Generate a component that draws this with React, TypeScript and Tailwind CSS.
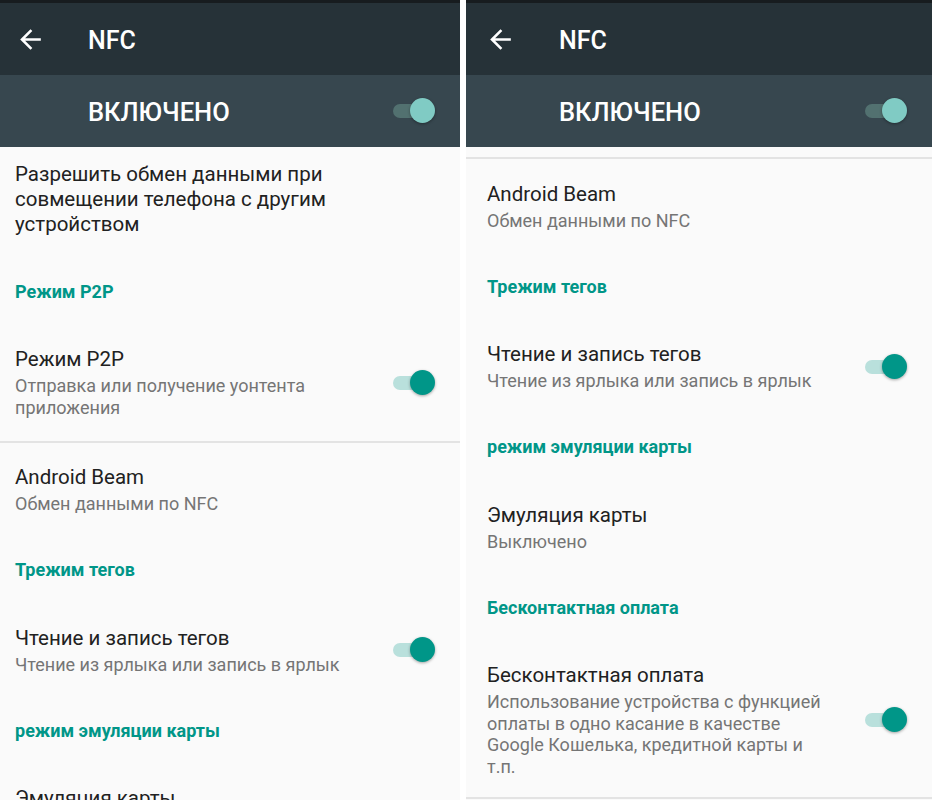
import React from "react";

const FONT = { fontFamily: "Roboto, 'Noto Sans', sans-serif" };

function BackArrow() {
  return (
    <svg width="31" height="31" viewBox="0 0 24 24" fill="#ffffff" aria-hidden="true">
      <path d="M20 11H7.83l5.59-5.59L12 4l-8 8 8 8 1.41-1.41L7.83 13H20v-2z" />
    </svg>
  );
}

function Switch({ dark }: { dark?: boolean }) {
  return (
    <div className="relative w-[42px] h-[26px] shrink-0">
      <div
        className={
          "absolute left-0 top-[6px] h-[14px] w-[36px] rounded-full " +
          (dark ? "bg-[#527170]" : "bg-[#b9e0dc]")
        }
      />
      <div
        className={
          "absolute right-0 top-0 h-[25px] w-[25px] rounded-full shadow-[0_1px_3px_rgba(0,0,0,0.35)] " +
          (dark ? "bg-[#80cbc4]" : "bg-[#009688]")
        }
      />
    </div>
  );
}

type Item = {
  kind: "item" | "cat" | "divider" | "space";
  title?: string[];
  summary?: string[];
  toggle?: boolean;
  first?: boolean;
  last?: boolean;
  h?: string;
};

function Row({ it, pl }: { it: Item; pl: string }) {
  if (it.kind === "divider") return <div className="h-[2px] bg-[#e3e3e3] shrink-0" />;
  if (it.kind === "space") return <div className={"shrink-0 " + (it.h || "")} />;
  if (it.kind === "cat")
    return (
      <div className={"h-[66px] flex items-center shrink-0 " + pl}>
        <span className="text-[18px] leading-[20px] font-bold text-[#009688]">{it.title![0]}</span>
      </div>
    );
  const pad = it.first ? "pt-[15px] pb-[21.5px]" : it.last ? "pt-[22.5px] pb-[20px]" : "py-[22.5px]";
  return (
    <div className={"flex items-center pr-[25px] shrink-0 " + pl + " " + pad}>
      <div className="flex-1 flex flex-col">
        <div className="text-[20.5px] leading-[25px] text-[#212121]">
          {it.title!.map((l, i) => (
            <div key={i} className="whitespace-nowrap">
              {l}
            </div>
          ))}
        </div>
        {it.summary && (
          <div className="mt-[3px] text-[18px] leading-[21.5px] text-[#757575]">
            {it.summary.map((l, i) => (
              <div key={i} className="whitespace-nowrap">
                {l}
              </div>
            ))}
          </div>
        )}
      </div>
      {it.toggle && <Switch />}
    </div>
  );
}

function Panel({
  width,
  items,
  pl,
  arrowPl,
  titleGap,
  barPl,
}: {
  width: string;
  items: Item[];
  pl: string;
  arrowPl: string;
  titleGap: string;
  barPl: string;
}) {
  return (
    <div className={"flex flex-col h-[800px] overflow-hidden bg-[#fafafa] shrink-0 " + width}>
      <div className="h-[3px] bg-[#171c1f] shrink-0" />
      <div className={"h-[72px] bg-[#263238] flex items-center shrink-0 " + arrowPl}>
        <BackArrow />
        <span className={"mt-[3px] text-[25px] font-medium text-white leading-none " + titleGap}>NFC</span>
      </div>
      <div className="h-[72px] bg-[#37474f] flex items-center justify-between pr-[25px] shrink-0">
        <span className={"mt-[3px] text-[25.5px] font-medium text-white leading-none " + barPl}>ВКЛЮЧЕНО</span>
        <Switch dark />
      </div>
      {items.map((it, i) => (
        <Row key={i} it={it} pl={pl} />
      ))}
    </div>
  );
}

const leftItems: Item[] = [
  {
    kind: "item",
    first: true,
    title: ["Разрешить обмен данными при", "совмещении телефона с другим", "устройством"],
  },
  { kind: "cat", title: ["Режим P2P"] },
  {
    kind: "item",
    title: ["Режим P2P"],
    summary: ["Отправка или получение уонтента", "приложения"],
    toggle: true,
  },
  { kind: "divider" },
  { kind: "item", title: ["Android Beam"], summary: ["Обмен данными по NFC"] },
  { kind: "cat", title: ["Трежим тегов"] },
  {
    kind: "item",
    title: ["Чтение и запись тегов"],
    summary: ["Чтение из ярлыка или запись в ярлык"],
    toggle: true,
  },
  { kind: "cat", title: ["режим эмуляции карты"] },
  { kind: "item", title: ["Эмуляция карты"], summary: ["Выключено"] },
];

const rightItems: Item[] = [
  { kind: "space", h: "h-[10px]" },
  { kind: "divider" },
  { kind: "item", title: ["Android Beam"], summary: ["Обмен данными по NFC"] },
  { kind: "cat", title: ["Трежим тегов"] },
  {
    kind: "item",
    title: ["Чтение и запись тегов"],
    summary: ["Чтение из ярлыка или запись в ярлык"],
    toggle: true,
  },
  { kind: "cat", title: ["режим эмуляции карты"] },
  { kind: "item", title: ["Эмуляция карты"], summary: ["Выключено"] },
  { kind: "cat", title: ["Бесконтактная оплата"] },
  {
    kind: "item",
    last: true,
    title: ["Бесконтактная оплата"],
    summary: [
      "Использование устройства с функцией",
      "оплаты в одно касание в качестве",
      "Google Кошелька, кредитной карты и",
      "т.п.",
    ],
    toggle: true,
  },
  { kind: "divider" },
];

export default function App() {
  return (
    <div className="flex w-[932px] h-[800px] bg-white overflow-hidden" style={FONT}>
      <Panel
        width="w-[460px]"
        items={leftItems}
        pl="pl-[15px]"
        arrowPl="pl-[15px]"
        titleGap="ml-[42px]"
        barPl="pl-[88px]"
      />
      <div className="w-[6px] shrink-0 bg-white" />
      <Panel
        width="w-[466px]"
        items={rightItems}
        pl="pl-[21px]"
        arrowPl="pl-[19px]"
        titleGap="ml-[43px]"
        barPl="pl-[93px]"
      />
    </div>
  );
}
